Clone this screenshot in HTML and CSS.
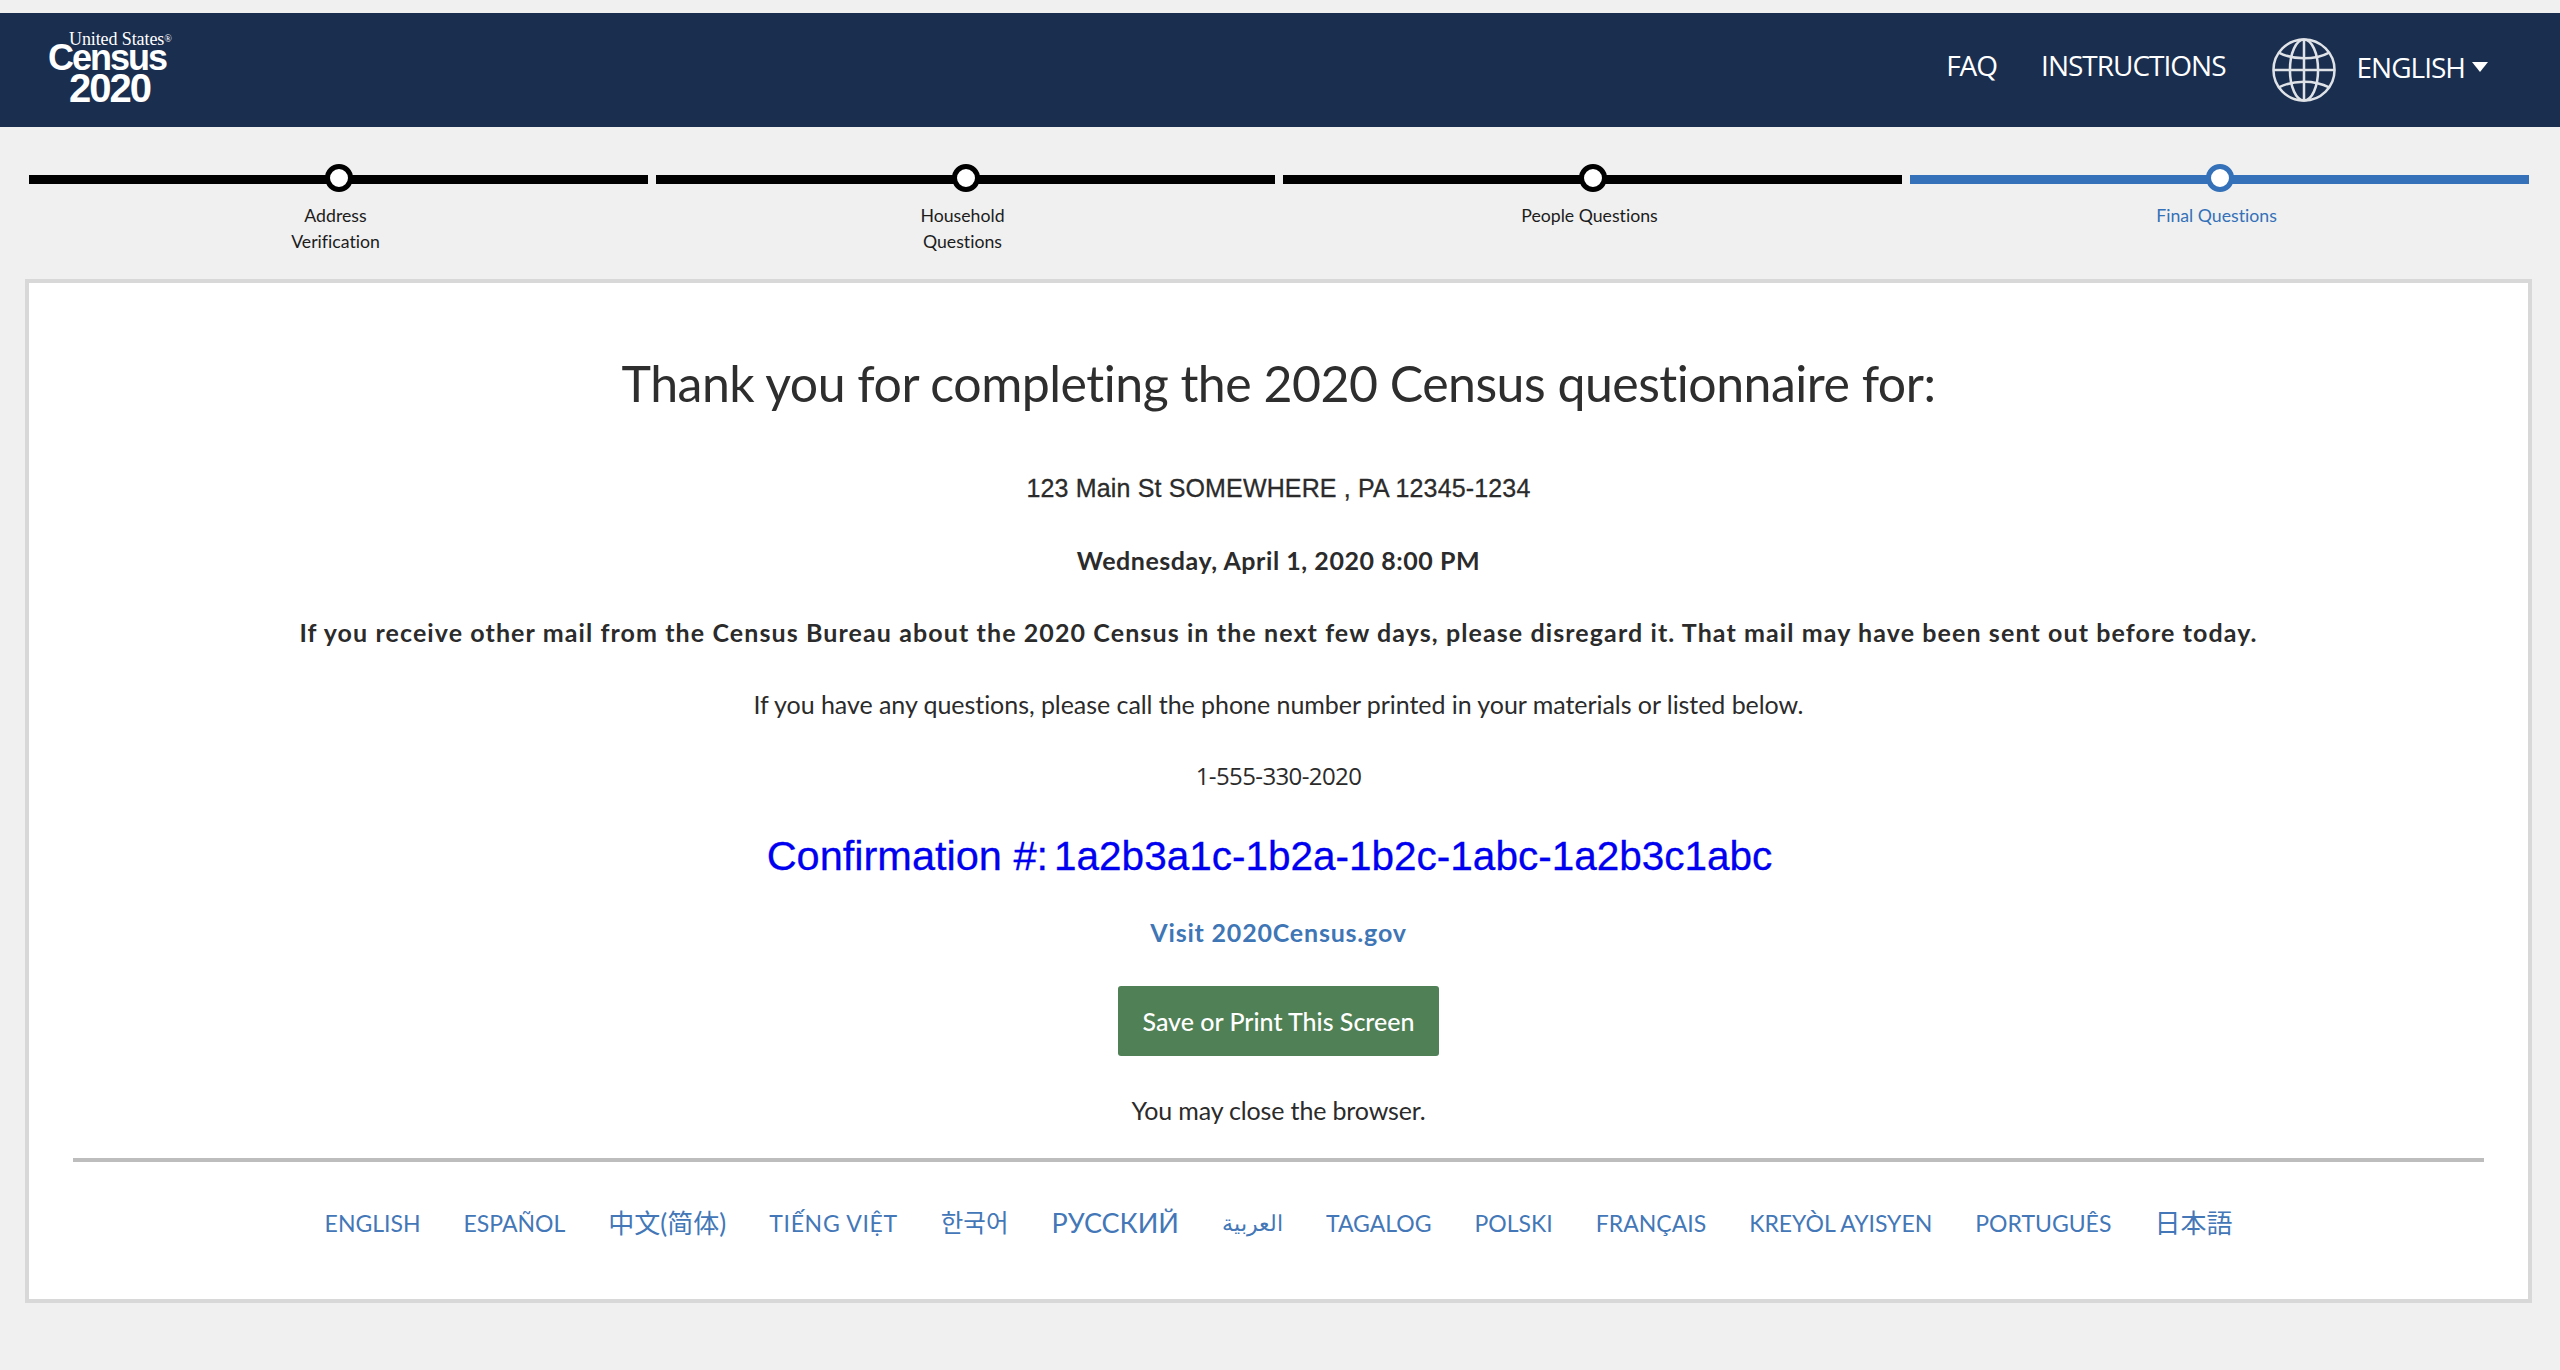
FILE: index.html
```html
<!DOCTYPE html>
<html lang="en">
<head>
<meta charset="utf-8">
<title>2020 Census</title>
<link rel="stylesheet" href="styles.css">
</head>
<body>
<header class="topbar">
  <div class="logo">
    <span class="logo-us">United States<sup>®</sup></span>
    <span class="logo-census">Census</span>
    <span class="logo-year">2020</span>
  </div>
  <nav class="topnav">
    <a class="nav-link faq">FAQ</a>
    <a class="nav-link instr">INSTRUCTIONS</a>
    <svg class="globe" viewBox="0 0 66 66" fill="none" stroke="#dfe2e7" stroke-width="2.6">
      <ellipse cx="33" cy="33" rx="31.5" ry="31.5"/>
      <ellipse cx="33" cy="33" rx="14.5" ry="31.5"/>
      <path d="M33 1.5V64.500M1.500 33H64.500"/>
      <path d="M7 15C22 23 44 23 59 15M7 51C22 43 44 43 59 51"/>
    </svg>
    <a class="nav-link lang">ENGLISH<span class="caret"></span></a>
  </nav>
</header>

<ol class="steps">
  <li class="step"><div class="track"><span class="dot"></span></div><p class="step-label">Address<br>Verification</p></li>
  <li class="step"><div class="track"><span class="dot"></span></div><p class="step-label">Household<br>Questions</p></li>
  <li class="step"><div class="track"><span class="dot"></span></div><p class="step-label">People Questions</p></li>
  <li class="step current"><div class="track"><span class="dot"></span></div><p class="step-label">Final Questions</p></li>
</ol>

<main class="card">
  <h1 class="title">Thank you for completing the 2020 Census questionnaire for:</h1>
  <p class="line address">123 Main St SOMEWHERE , PA 12345-1234</p>
  <p class="line strong date">Wednesday, April 1, 2020 8:00 PM</p>
  <p class="line strong">If you receive other mail from the Census Bureau about the 2020 Census in the next few days, please disregard it. That mail may have been sent out before today.</p>
  <p class="line">If you have any questions, please call the phone number printed in your materials or listed below.</p>
  <p class="line phone">1-555-330-2020</p>
  <p class="confirm"><span class="confirm-label">Confirmation #:</span><span class="confirm-code">1a2b3a1c-1b2a-1b2c-1abc-1a2b3c1abc</span></p>
  <p class="line visit"><a>Visit 2020Census.gov</a></p>
  <div class="btn-row"><button class="save-btn">Save or Print This Screen</button></div>
  <p class="line close">You may close the browser.</p>
  <hr class="rule">
  <ul class="langs">
    <li>ENGLISH</li>
    <li>ESPAÑOL</li>
    <li class="cjk" lang="zh">中文(简体)</li>
    <li class="viet">TIẾNG VIỆT</li>
    <li class="ko" lang="ko">한국어</li>
    <li class="ru">РУССКИЙ</li>
    <li class="ar" lang="ar">العربية</li>
    <li>TAGALOG</li>
    <li>POLSKI</li>
    <li>FRANÇAIS</li>
    <li>KREYÒL AYISYEN</li>
    <li>PORTUGUÊS</li>
    <li class="cjk" lang="ja">日本語</li>
  </ul>
</main>
</body>
</html>
```
FILE: styles.css
```css
* { box-sizing: border-box; }
html, body { margin: 0; padding: 0; }
body {
  background: #f0f0f0;
  color: #2b2b2b;
  font-family: "Lato", "Noto Sans CJK SC", sans-serif;
  font-variant-ligatures: none;
  height: 1370px;
  overflow: hidden;
  padding-top: 13px;
}
.topbar {
  height: 114px;
  background: #1a2e4f;
  display: flex;
  justify-content: space-between;
  align-items: flex-start;
  padding: 0 72px 0 48px;
  color: #fff;
}
.logo {
  width: 130px;
  display: flex;
  flex-direction: column;
  align-items: flex-start;
  padding-top: 19px;
}
.logo-us {
  font-family: "Liberation Serif", serif;
  font-size: 18px;
  line-height: 14px;
  margin-left: 21px;
  letter-spacing: -0.1px;
  white-space: nowrap;
}
.logo-us sup { font-size: 10px; line-height: 0; vertical-align: 3px; }
.logo-census {
  font-family: "Liberation Sans", sans-serif;
  font-weight: 700;
  font-size: 36px;
  line-height: 26px;
  letter-spacing: -2px;
  margin-top: -1px;
}
.logo-year {
  font-family: "Liberation Sans", sans-serif;
  font-weight: 700;
  font-size: 40px;
  line-height: 30px;
  letter-spacing: -2px;
  margin-left: 21px;
  margin-top: 2px;
}
.topnav { display: flex; align-items: flex-start; font-family: "Open Sans", sans-serif; font-stretch: 90%; }
.nav-link { font-size: 28px; letter-spacing: -1px; line-height: 36px; margin-top: 34px; white-space: nowrap; }
.faq { margin-right: 44px; }
.instr { margin-right: 46px; }
.globe { width: 64px; height: 64px; margin-top: 25px; margin-right: 21px; }
.lang { margin-top: 36px; display: flex; align-items: center; }
.caret {
  width: 0;
  height: 0;
  margin-left: 7px;
  border-left: 8px solid transparent;
  border-right: 8px solid transparent;
  border-top: 10px solid #fff;
}
.steps {
  list-style: none;
  margin: 0;
  padding: 48px 31px 0 29px;
  height: 152px;
  display: grid;
  grid-template-columns: repeat(4, 1fr);
  column-gap: 8px;
}
.track { position: relative; height: 9px; background: #000; }
.dot {
  position: absolute;
  left: 50%;
  top: -11px;
  width: 28px;
  height: 28px;
  margin-left: -14px;
  border-radius: 50%;
  background: #fff;
  border: 5px solid #000;
}
.step-label {
  margin: 19px 6px 0 0;
  text-align: center;
  font-size: 17.700px;
  line-height: 26px;
  color: #1c1c1c;
}
.current .track { background: #3471b8; }
.current .dot { border-color: #3471b8; }
.current .step-label { color: #3471b8; }
.card {
  margin: 0 28px 0 25px;
  height: 1024px;
  background: #fff;
  border: 4px solid #d8d8d8;
  text-align: center;
  padding: 64px 44px 0;
}
.title { margin: 0 0 51px; font-size: 50px; line-height: 72px; font-weight: 400; letter-spacing: -0.5px; color: #2e2e2e; }
.line { margin: 0 0 36px; font-size: 25px; line-height: 36px; letter-spacing: -0.05px; }
.address { font-family: "Liberation Sans", sans-serif; letter-spacing: 0.15px; -webkit-text-stroke: 0.3px #2b2b2b; }
.strong { font-weight: 700; letter-spacing: 1.1px; }
.date { letter-spacing: 0.55px; }
.phone { font-family: "Open Sans", sans-serif; font-stretch: 90%; font-size: 24px; letter-spacing: -0.6px; }
.confirm { margin: 0 0 23px; padding-right: 18px; line-height: 52px; color: #0000f0; font-family: "Liberation Sans", sans-serif; -webkit-text-stroke: 0.3px #0000f0; }
.confirm-label { font-size: 41.500px; }
.confirm-code { font-size: 40.500px; margin-left: 6px; }
.visit { font-weight: 700; letter-spacing: 0.8px; color: #3f76b5; }
.btn-row { display: flex; justify-content: center; margin-bottom: 36px; }
.save-btn {
  width: 321px;
  height: 70px;
  border: 0;
  border-radius: 3px;
  background: #508055;
  color: #fff;
  font-family: inherit;
  font-size: 25px;
  font-weight: 500;
}
.close { margin-bottom: 30px; letter-spacing: -0.15px; }
.rule { border: 0; height: 4px; background: #bdbdbd; margin: 0; }
.langs {
  list-style: none;
  margin: 43px 0 0;
  padding: 0;
  display: flex;
  justify-content: center;
  align-items: center;
  gap: 43px;
  font-size: 23px;
  line-height: 36px;
  color: #4377b7;
}
.langs .viet { letter-spacing: 0.7px; }
.langs .ru { font-size: 27px; }
.langs .cjk { font-size: 26px; }
.langs .ko { font-size: 24.500px; }
.langs .ar { font-size: 21.500px; }
```
